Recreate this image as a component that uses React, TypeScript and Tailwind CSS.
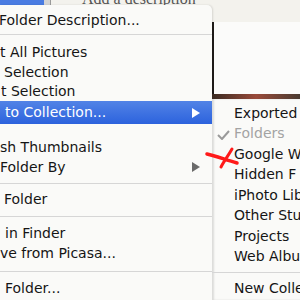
import React from "react";

type RowProps = {
  text: string;
  x?: number;
  h?: string;
  active?: boolean;
  arrow?: boolean;
};

const Row = ({ text, h = "h-[20px]", active, arrow, x = 0 }: RowProps) => (
  <div
    className={`${h} flex items-center whitespace-nowrap relative ${
      active
        ? "bg-gradient-to-b from-[#5283e6] to-[#2c62dd] text-white"
        : "text-[#151515]"
    }`}
  >
    <span style={{ marginLeft: x }}>{text}</span>
    {arrow && (
      <svg
        width="8"
        height="10"
        viewBox="0 0 8 10"
        className="absolute left-[192px] top-1/2 -translate-y-1/2"
      >
        <path d="M0 0 L8 5 L0 10 Z" fill={active ? "#ffffff" : "#6a6a6a"} />
      </svg>
    )}
  </div>
);

const Sep = ({ h, line }: { h: string; line: string }) => (
  <div className={`${h} flex flex-col`}>
    <div className={`${line} h-px bg-[#d6d6d6] w-full`} />
  </div>
);

const SubRow = ({ text, muted, check }: { text: string; muted?: boolean; check?: boolean }) => (
  <div className={`h-[20.5px] flex items-center whitespace-nowrap relative ${muted ? "text-[#a3a3a3]" : "text-[#151515]"}`}>
    {check && (
      <svg width="13" height="10" viewBox="0 0 13 10" className="absolute left-[5px] top-[6px]">
        <path d="M1 5 L5 9 L12 1" stroke="#9a9a9a" strokeWidth="2" fill="none" />
      </svg>
    )}
    <span className="ml-[22px]">{text}</span>
  </div>
);

export default function App() {
  return (
    <div className="w-[300px] h-[300px] relative overflow-hidden bg-[#f3f2ed] text-[14px] font-['DejaVu_Sans',sans-serif]">
      {/* top strip */}
      <div className="h-[5px] flex overflow-hidden">
        <div className="w-[44px] shrink-0 bg-[#4a7ce2]" />
        <div className="w-[6px] shrink-0 bg-[#d4d4d4]" />
        <div className="w-px shrink-0 bg-[#9a9a9a]" />
        <div className="flex-1 bg-[#f3f2ed] overflow-hidden">
          <div className="ml-[31px] mt-[-9px] leading-[16px] text-[16px] text-[#555555] whitespace-nowrap font-['Liberation_Serif',serif]">
            Add a description
          </div>
        </div>
      </div>

      <div className="flex">
        {/* main menu */}
        <div className="w-[212px] shrink-0 h-[295px] bg-[#fafaf8] rounded-tr-[5px] pt-[5px] shadow-[1px_0_2px_rgba(0,0,0,0.12)]">
          <Row text="Folder Description..." x={-1} />
          <Sep h="h-[12px]" line="mt-[4px]" />
          <Row text="t All Pictures" />
          <Row text="Selection" x={4} />
          <Row text="t Selection" x={1} h="h-[19px]" />
          <Row text="to Collection..." x={5} h="h-[23px]" active arrow />
          <div className="h-[13px]" />
          <Row text="sh Thumbnails" />
          <Row text="Folder By" arrow />
          <Sep h="h-[12px]" line="mt-[6px]" />
          <Row text="Folder" x={4} />
          <Sep h="h-[14px]" line="mt-[7px]" />
          <Row text="in Finder" x={5} />
          <Row text="ve from Picasa..." />
          <Sep h="h-[15px]" line="mt-[8px]" />
          <Row text="Folder..." x={5} />
        </div>

        {/* right side */}
        <div className="flex-1 min-w-0 flex flex-col overflow-hidden">
          <div className="h-[17px]" />
          <div className="h-[72px] flex">
            <div className="w-[2px] bg-[#1e1a18]" />
            <div className="flex-1 bg-[#fbfbfa]" />
          </div>
          <div className="h-[5px] bg-gradient-to-r from-[#3a2a22] via-[#9a4a3a] to-[#4a3a30]" />
          <div className="flex-1 bg-[#fafaf8] pt-[4px] shadow-[inset_2px_0_2px_rgba(0,0,0,0.12)]">
            <SubRow text="Exported" />
            <SubRow text="Folders" muted check />
            <SubRow text="Google W" />
            <SubRow text="Hidden F" />
            <SubRow text="iPhoto Lib" />
            <SubRow text="Other Stu" />
            <SubRow text="Projects" />
            <SubRow text="Web Albu" />
            <div className="h-[11px] flex flex-col">
              <div className="mt-[5px] h-px bg-[#d6d6d6]" />
            </div>
            <SubRow text="New Colle" />
          </div>
        </div>
      </div>

      {/* red mark */}
      <svg width="36" height="24" viewBox="0 0 36 24" className="absolute left-[204px] top-[146px]">
        <path d="M3 8 C12 10 22 14 33 17" stroke="#ff1a1a" strokeWidth="3.5" strokeLinecap="round" fill="none" />
        <path d="M28 3 C24 10 20 15 17 21" stroke="#ff1a1a" strokeWidth="3" strokeLinecap="round" fill="none" />
      </svg>
    </div>
  );
}
